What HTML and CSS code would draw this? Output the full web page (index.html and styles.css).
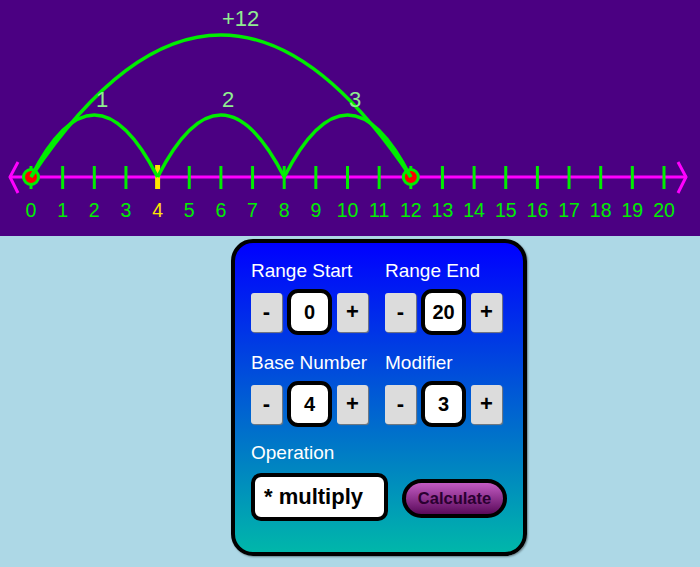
FILE: index.html
```html
<!DOCTYPE html>
<html lang="en">
<head>
<meta charset="utf-8">
<title>Number Line</title>
<link rel="stylesheet" href="styles.css">
</head>
<body>
<svg class="numberline" width="700" height="236" viewBox="0 0 700 236" xmlns="http://www.w3.org/2000/svg">
  <rect class="nl-bg" x="0" y="0" width="700" height="236"/>
  <line class="axis" x1="9" y1="177" x2="687" y2="177"/>
  <polyline class="arrow" points="18,162 10,177 18,193"/>
  <polyline class="arrow" points="678,162 686,177 678,193"/>
  <g class="ticks">
    <line x1="31" y1="166" x2="31" y2="189"/>
    <line x1="62.65" y1="166" x2="62.65" y2="189"/>
    <line x1="94.3" y1="166" x2="94.3" y2="189"/>
    <line x1="125.95" y1="166" x2="125.95" y2="189"/>
    <line x1="189.25" y1="166" x2="189.25" y2="189"/>
    <line x1="220.9" y1="166" x2="220.9" y2="189"/>
    <line x1="252.55" y1="166" x2="252.55" y2="189"/>
    <line x1="284.2" y1="166" x2="284.2" y2="189"/>
    <line x1="315.85" y1="166" x2="315.85" y2="189"/>
    <line x1="347.5" y1="166" x2="347.5" y2="189"/>
    <line x1="379.15" y1="166" x2="379.15" y2="189"/>
    <line x1="410.8" y1="166" x2="410.8" y2="189"/>
    <line x1="442.45" y1="166" x2="442.45" y2="189"/>
    <line x1="474.1" y1="166" x2="474.1" y2="189"/>
    <line x1="505.75" y1="166" x2="505.75" y2="189"/>
    <line x1="537.4" y1="166" x2="537.4" y2="189"/>
    <line x1="569.05" y1="166" x2="569.05" y2="189"/>
    <line x1="600.7" y1="166" x2="600.7" y2="189"/>
    <line x1="632.35" y1="166" x2="632.35" y2="189"/>
    <line x1="664" y1="166" x2="664" y2="189"/>
  </g>
  <line class="tick-base" x1="157.6" y1="165" x2="157.6" y2="189"/>
  <g class="tick-labels">
    <text x="31" y="217">0</text>
    <text x="62.65" y="217">1</text>
    <text x="94.3" y="217">2</text>
    <text x="125.95" y="217">3</text>
    <text class="base-label" x="157.6" y="217">4</text>
    <text x="189.25" y="217">5</text>
    <text x="220.9" y="217">6</text>
    <text x="252.55" y="217">7</text>
    <text x="284.2" y="217">8</text>
    <text x="315.85" y="217">9</text>
    <text x="347.5" y="217">10</text>
    <text x="379.15" y="217">11</text>
    <text x="410.8" y="217">12</text>
    <text x="442.45" y="217">13</text>
    <text x="474.1" y="217">14</text>
    <text x="505.75" y="217">15</text>
    <text x="537.4" y="217">16</text>
    <text x="569.05" y="217">17</text>
    <text x="600.7" y="217">18</text>
    <text x="632.35" y="217">19</text>
    <text x="664" y="217">20</text>
  </g>
  <circle class="endpoint" cx="31" cy="177" r="7.5"/>
  <circle class="endpoint" cx="410.8" cy="177" r="7.5"/>
  <g class="jumps">
    <path d="M31 177 Q94.3 53 157.6 177"/>
    <path d="M157.6 177 Q220.9 53 284.2 177"/>
    <path d="M284.2 177 Q347.5 53 410.8 177"/>
    <path d="M31 177 Q220.9 -107 410.8 177"/>
  </g>
  <g class="jump-labels">
    <text x="96" y="107">1</text>
    <text x="222" y="107">2</text>
    <text x="349" y="107">3</text>
    <text x="222" y="26">+12</text>
  </g>
</svg>

<div class="panel">
  <div class="fields">
    <div class="field">
      <div class="field-label">Range Start</div>
      <div class="stepper">
        <button class="step">-</button>
        <div class="value">0</div>
        <button class="step">+</button>
      </div>
    </div>
    <div class="field">
      <div class="field-label">Range End</div>
      <div class="stepper">
        <button class="step">-</button>
        <div class="value">20</div>
        <button class="step">+</button>
      </div>
    </div>
    <div class="field">
      <div class="field-label">Base Number</div>
      <div class="stepper">
        <button class="step">-</button>
        <div class="value">4</div>
        <button class="step">+</button>
      </div>
    </div>
    <div class="field">
      <div class="field-label">Modifier</div>
      <div class="stepper">
        <button class="step">-</button>
        <div class="value">3</div>
        <button class="step">+</button>
      </div>
    </div>
  </div>
  <div class="field-label op-label">Operation</div>
  <div class="op-row">
    <div class="op-select">* multiply</div>
    <button class="calc">Calculate</button>
  </div>
</div>
</body>
</html>
```

FILE: styles.css
```css
html, body {
  margin: 0;
  padding: 0;
}
body {
  background: #add8e6;
  font-family: "Liberation Sans", Arial, sans-serif;
  width: 700px;
  height: 567px;
  overflow: hidden;
}
.numberline {
  display: block;
}
.nl-bg {
  fill: #4b0082;
}
.axis {
  stroke: #ff00ff;
  stroke-width: 3;
}
.arrow {
  fill: none;
  stroke: #ff00ff;
  stroke-width: 3;
}
.ticks line {
  stroke: #00ee00;
  stroke-width: 3;
}
.tick-base {
  stroke: #ffe600;
  stroke-width: 5;
}
.tick-labels text {
  fill: #00ee00;
  font-family: "Liberation Sans", Arial, sans-serif;
  font-size: 19.5px;
  text-anchor: middle;
}
.tick-labels .base-label {
  fill: #ffe600;
}
.endpoint {
  fill: #ff0000;
  stroke: #00ee00;
  stroke-width: 3;
}
.jumps path {
  fill: none;
  stroke: #00ee00;
  stroke-width: 3.5;
}
.jump-labels text {
  fill: #90ee90;
  font-family: "Liberation Sans", Arial, sans-serif;
  font-size: 22px;
}

.panel {
  box-sizing: border-box;
  width: 296px;
  margin: 3px 0 0 231px;
  border: 4px solid #000;
  border-radius: 22px;
  background: linear-gradient(to bottom, #0000ff 0%, #00b7aa 100%);
  padding: 17px 16px 31px 16px;
  box-shadow: 1px 1px 2px rgba(0, 0, 0, 0.4);
}
.fields {
  display: grid;
  grid-template-columns: 117px 117px;
  column-gap: 17px;
  row-gap: 17px;
}
.field-label {
  color: #fff;
  font-size: 19px;
  line-height: 22px;
  height: 22px;
}
.stepper {
  margin-top: 7px;
  height: 46px;
  display: flex;
  align-items: center;
  gap: 5px;
}
.step {
  box-sizing: border-box;
  flex-shrink: 0;
  width: 31px;
  height: 39px;
  padding: 0;
  border: none;
  border-radius: 3px;
  background: #dcdcdc;
  box-shadow: 1px 1px 1px #7a7a7a;
  font-family: "Liberation Sans", Arial, sans-serif;
  font-weight: bold;
  font-size: 22px;
  color: #000;
}
.value {
  box-sizing: border-box;
  flex-shrink: 0;
  width: 45px;
  height: 46px;
  border: 4px solid #000;
  border-radius: 11px;
  background: #fff;
  display: flex;
  align-items: center;
  justify-content: center;
  font-weight: bold;
  font-size: 20px;
  color: #000;
}
.op-label {
  margin-top: 15px;
}
.op-row {
  margin-top: 9px;
  display: flex;
  align-items: center;
  gap: 14px;
}
.op-select {
  box-sizing: border-box;
  flex-shrink: 0;
  width: 137px;
  height: 48px;
  border: 4px solid #000;
  border-radius: 10px;
  background: #fff;
  padding-left: 9px;
  display: flex;
  align-items: center;
  font-weight: bold;
  font-size: 22px;
  color: #000;
}
.calc {
  box-sizing: border-box;
  flex-shrink: 0;
  width: 105px;
  height: 39px;
  margin-top: 3px;
  padding: 0;
  border: 4px solid #000;
  border-radius: 20px;
  background: linear-gradient(to bottom, #c35bc3 0%, #5a0a5a 100%);
  font-family: "Liberation Sans", Arial, sans-serif;
  font-weight: bold;
  font-size: 16.5px;
  color: #2a0030;
}
```
